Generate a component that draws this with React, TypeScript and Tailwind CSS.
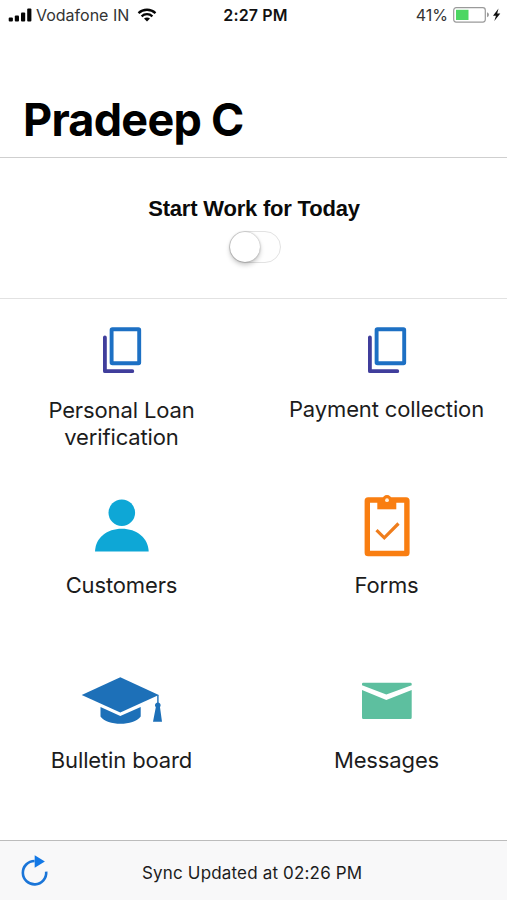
import React from "react";

function CopyIcon() {
  return (
    <svg width="90" height="70" viewBox="76 315 90 70" fill="none">
      <path d="M104.9 337.5V371.2H132.3" stroke="#403e9c" strokeWidth="3.8" strokeLinecap="round" strokeLinejoin="round" />
      <rect x="111.6" y="329.2" width="27.6" height="34" rx="0.8" stroke="#1d70c4" strokeWidth="3.9" />
    </svg>
  );
}

function PersonIcon() {
  return (
    <svg width="90" height="70" viewBox="76 490 90 70" fill="#0ea7d6">
      <circle cx="121.8" cy="512.7" r="13.3" />
      <path d="M95 551.5C95.5 537.5 107 528.7 121.8 528.7S148.1 537.5 148.7 551.5Z" />
    </svg>
  );
}

function ClipboardIcon() {
  return (
    <svg width="90" height="70" viewBox="341 490 90 70" fill="none">
      <rect x="367.3" y="500" width="39.6" height="53.5" rx="0.8" stroke="#f97e11" strokeWidth="5.4" />
      <path d="M377.3 500H396.3V509.3H377.3Z" fill="#f97e11" />
      <circle cx="387" cy="499.7" r="4.7" fill="#f97e11" />
      <circle cx="387" cy="500.2" r="1.9" fill="#fff0dc" />
      <path d="M376.5 530.2L384.3 537.8L398.5 523.5" stroke="#ef7d1c" strokeWidth="3.2" />
    </svg>
  );
}

function GraduationIcon() {
  return (
    <svg width="90" height="70" viewBox="76 665 90 70" fill="#1d70b8">
      <path d="M81.7 695L120.3 677.2L158.8 695L120.3 712.5Z" />
      <path d="M100.5 707L120.3 716L140.7 707V716.5C137 721.5 129 723.8 120.5 723.8S104 721.5 100.5 716.5Z" />
      <path d="M157.2 695H158.6V702.6C161 703.6 161 706 160 707.2L162 721.7H153L155.8 707.2C154.600 706 154.600 703.600 157.200 702.600Z" />
    </svg>
  );
}

function MailIcon() {
  return (
    <svg width="90" height="70" viewBox="341 665 90 70" fill="#5dbf9f">
      <path d="M363.2 682.7H410.5Q411.7 682.7 411.7 684V685.3L386.300 694.400L362 685.300V684Q362 682.700 363.200 682.700Z" />
      <path d="M362 690L386.300 700L411.700 690V717.500Q411.700 719 410.300 719H363.400Q362 719 362 717.500Z" />
    </svg>
  );
}

const tiles = [
  { label: "Personal Loan verification", icon: <CopyIcon />, text: "mt-[12px] w-[170px]" },
  { label: "Payment collection", icon: <CopyIcon />, text: "mt-[11px]" },
  { label: "Customers", icon: <PersonIcon />, text: "mt-[12px]" },
  { label: "Forms", icon: <ClipboardIcon />, text: "mt-[12px]" },
  { label: "Bulletin board", icon: <GraduationIcon />, text: "mt-[12px]" },
  { label: "Messages", icon: <MailIcon />, text: "mt-[12px]" },
];

function StatusBar() {
  return (
    <div className="grid h-[30px] grid-cols-[1fr_auto_1fr] items-center pl-2 pr-[6px] text-[16px] leading-[30px] text-[#333]">
      <div className="flex items-center">
        <svg width="24" height="14" viewBox="0 0 24 14" fill="#050505">
          <rect x="0.7" y="9.5" width="4.2" height="4" rx="1" />
          <rect x="6.8" y="7.5" width="4.2" height="6" rx="1" />
          <rect x="13" y="4.5" width="4.2" height="9" rx="1" />
          <rect x="19.2" y="0.5" width="4.2" height="13" rx="1" />
        </svg>
        <span className="ml-[4px] whitespace-nowrap">Vodafone IN</span>
        <svg className="mb-px ml-[8px]" width="20" height="14" viewBox="0 0 20 14" fill="none" stroke="#050505" strokeWidth="2.3">
          <path d="M1.5 5.2C6.3 .6 13.7 .6 18.5 5.2" />
          <path d="M4.6 8.3C7.7 5.5 12.3 5.5 15.4 8.3" />
          <path d="M7 10.5C8.7 9 11.3 9 13 10.5L10 13.5Z" fill="#050505" stroke="none" />
        </svg>
      </div>
      <div className="ml-[2px] whitespace-nowrap font-semibold tracking-[0.15px] text-[#111]">2:27 PM</div>
      <div className="flex items-center justify-end">
        <span className="mr-[5px]">41%</span>
        <svg width="48" height="16" viewBox="453 7 48 16">
          <rect x="453.7" y="7.7" width="31.6" height="14.4" rx="2.5" fill="#fff" stroke="#9a9a9a" strokeWidth="1.2" />
          <rect x="456" y="9.8" width="12.5" height="10.2" fill="#4cd662" />
          <path d="M487 12.3Q489 13 489 14.7T487 17.3Z" fill="#9a9a9a" />
          <path d="M498.5 8.5L493 15.8H496L494.3 21L500.3 13.5H497.2Z" fill="#111" />
        </svg>
      </div>
    </div>
  );
}

export default function App() {
  return (
    <div className="flex h-[900px] w-[507px] flex-col overflow-hidden bg-white font-['Inter',sans-serif] text-[#1c1c1c]">
      <header className="h-[158px] border-b border-[#cfcfcf]">
        <StatusBar />
        <h1 className="pl-[23px] pt-[62px] text-[45px] font-bold leading-[56px] tracking-[-0.75px] text-black">Pradeep C</h1>
      </header>
      <section className="flex h-[141px] flex-col items-center border-b border-[#e2e2e2] pl-px pt-[37px]">
        <h2 className="font-['Liberation_Sans',sans-serif] text-[22px] font-bold leading-[28px] tracking-[-0.2px] text-[#0a0a0a]">Start Work for Today</h2>
        <div className="ml-px mt-[8px] h-[32px] w-[52px] rounded-full border border-[#e2e2e2] bg-[#fefefe]">
          <div className="h-[30px] w-[30px] rounded-full bg-white shadow-[0_3px_5px_rgba(0,0,0,0.22),0_0_2px_rgba(0,0,0,0.35)]" />
        </div>
      </section>
      <main className="grid flex-1 auto-rows-[175px] grid-cols-[242px_240px] content-start gap-x-6 pt-4">
        {tiles.map((tile) => (
          <div key={tile.label} className="flex flex-col items-center">
            {tile.icon}
            <div className={`pl-px text-center text-[22px] leading-[27px] tracking-[-0.13px] ${tile.text}`}>{tile.label}</div>
          </div>
        ))}
      </main>
      <footer className="flex h-[60px] shrink-0 items-center border-t border-[#bcbcbc] bg-[#f8f8f9]">
        <svg className="ml-5 shrink-0" width="30" height="36" viewBox="20 853 30 36" fill="none">
          <path d="M46.2 871.7A11.7 11.7 0 1 1 34.6 861" stroke="#1a75d8" strokeWidth="2.6" />
          <path d="M34.7 855.3L44.9 861.4L34.7 867.7Z" fill="#1278e6" />
        </svg>
        <span className="ml-[92px] mt-[5px] whitespace-nowrap text-[17px] leading-[24px] tracking-[0.17px]">Sync Updated at 02:26 PM</span>
      </footer>
    </div>
  );
}
